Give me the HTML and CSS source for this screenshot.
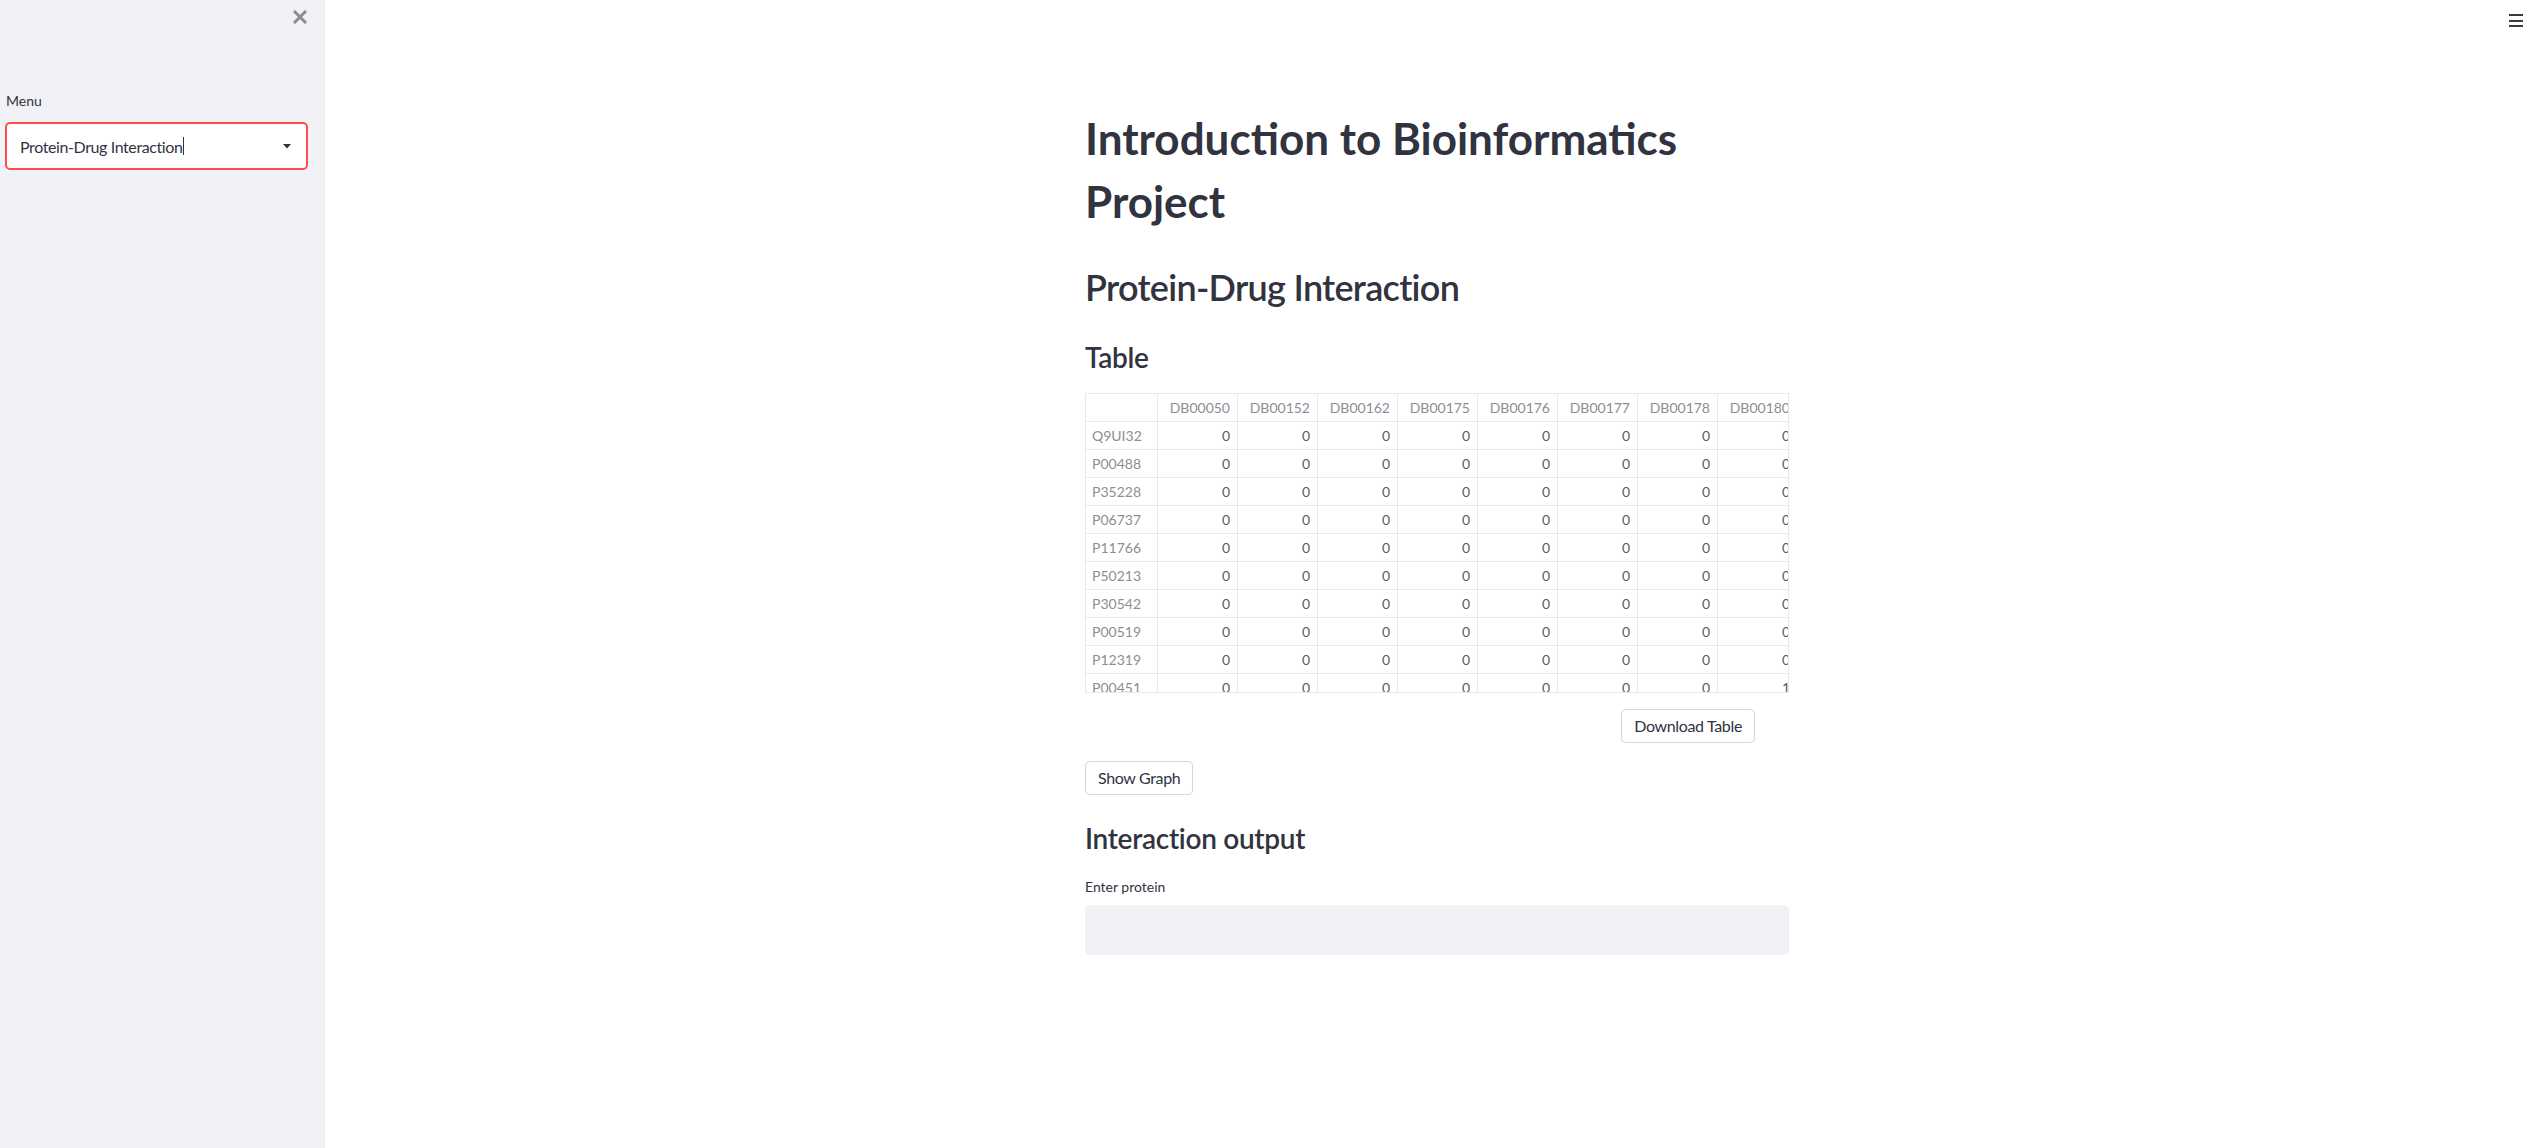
FILE: index.html
```html
<!DOCTYPE html>
<html lang="en">
<head>
<meta charset="utf-8">
<title>Introduction to Bioinformatics Project</title>
<link rel="stylesheet" href="styles.css">
</head>
<body>
<div class="app">
  <aside class="sidebar">
    <div class="sidebar-top">
      <button class="close-btn" aria-label="Close sidebar">
        <svg width="14" height="14" viewBox="0 0 14 14"><path d="M2 2 L12 12 M12 2 L2 12" stroke="#8b8c92" stroke-width="3" stroke-linecap="square" fill="none"/></svg>
      </button>
    </div>
    <div class="widget">
      <label class="widget-label">Menu</label>
      <div class="select">
        <span class="select-value">Protein-Drug Interaction</span><span class="text-caret"></span>
        <svg class="select-arrow" width="8" height="5" viewBox="0 0 8 5"><path d="M0 0 L8 0 L4 4.5 Z" fill="#31333f"/></svg>
      </div>
    </div>
  </aside>
  <main class="main">
    <header class="toolbar">
      <svg class="menu-icon" width="14" height="14" viewBox="0 0 14 14"><rect x="0" y="0" width="14" height="2" fill="#3a3b45"/><rect x="0" y="6" width="14" height="2" fill="#3a3b45"/><rect x="0" y="11" width="14" height="2" fill="#3a3b45"/></svg>
    </header>
    <div class="block">
      <h1 class="title">Introduction to Bioinformatics Project</h1>
      <h2 class="header">Protein-Drug Interaction</h2>
      <h3 class="subheader">Table</h3>
      <div class="table-wrap">
        <table class="df">
          <thead>
            <tr><th class="corner"></th><th>DB00050</th><th>DB00152</th><th>DB00162</th><th>DB00175</th><th>DB00176</th><th>DB00177</th><th>DB00178</th><th>DB00180</th><th>DB00181</th><th>DB00183</th></tr>
          </thead>
          <tbody>
            <tr><th class="idx">Q9UI32</th><td>0</td><td>0</td><td>0</td><td>0</td><td>0</td><td>0</td><td>0</td><td>0</td><td>0</td><td>0</td></tr>
            <tr><th class="idx">P00488</th><td>0</td><td>0</td><td>0</td><td>0</td><td>0</td><td>0</td><td>0</td><td>0</td><td>0</td><td>0</td></tr>
            <tr><th class="idx">P35228</th><td>0</td><td>0</td><td>0</td><td>0</td><td>0</td><td>0</td><td>0</td><td>0</td><td>0</td><td>0</td></tr>
            <tr><th class="idx">P06737</th><td>0</td><td>0</td><td>0</td><td>0</td><td>0</td><td>0</td><td>0</td><td>0</td><td>0</td><td>0</td></tr>
            <tr><th class="idx">P11766</th><td>0</td><td>0</td><td>0</td><td>0</td><td>0</td><td>0</td><td>0</td><td>0</td><td>0</td><td>0</td></tr>
            <tr><th class="idx">P50213</th><td>0</td><td>0</td><td>0</td><td>0</td><td>0</td><td>0</td><td>0</td><td>0</td><td>0</td><td>0</td></tr>
            <tr><th class="idx">P30542</th><td>0</td><td>0</td><td>0</td><td>0</td><td>0</td><td>0</td><td>0</td><td>0</td><td>0</td><td>0</td></tr>
            <tr><th class="idx">P00519</th><td>0</td><td>0</td><td>0</td><td>0</td><td>0</td><td>0</td><td>0</td><td>0</td><td>0</td><td>0</td></tr>
            <tr><th class="idx">P12319</th><td>0</td><td>0</td><td>0</td><td>0</td><td>0</td><td>0</td><td>0</td><td>0</td><td>0</td><td>0</td></tr>
            <tr><th class="idx">P00451</th><td>0</td><td>0</td><td>0</td><td>0</td><td>0</td><td>0</td><td>0</td><td>1</td><td>0</td><td>0</td></tr>
            <tr><th class="idx">P08172</th><td>0</td><td>0</td><td>0</td><td>0</td><td>0</td><td>0</td><td>0</td><td>0</td><td>0</td><td>0</td></tr>
          </tbody>
        </table>
      </div>
      <div class="download-row">
        <button class="btn">Download Table</button>
      </div>
      <div class="button-row">
        <button class="btn">Show Graph</button>
      </div>
      <h3 class="subheader output-head">Interaction output</h3>
      <label class="input-label">Enter protein</label>
      <div class="text-input"></div>
    </div>
  </main>
</div>
</body>
</html>
```

FILE: styles.css
```css
* { box-sizing: border-box; }

html, body {
  margin: 0;
  padding: 0;
  height: 100%;
  overflow: hidden;
  background: #ffffff;
  color: #31333f;
  font-family: "Source Sans Pro", Lato, "Noto Sans", sans-serif;
}

.app {
  display: flex;
  height: 100vh;
}

/* Sidebar */
.sidebar {
  width: 325px;
  flex: none;
  background: #f0f2f6;
  padding: 0 17px 0 5px;
  display: flex;
  flex-direction: column;
}

.sidebar-top {
  height: 90px;
  display: flex;
  justify-content: flex-end;
  align-items: flex-start;
}

.close-btn {
  margin-top: 10px;
  margin-right: 1px;
  width: 14px;
  height: 14px;
  padding: 0;
  border: none;
  background: none;
  display: flex;
}

.widget {
  display: flex;
  flex-direction: column;
}

.widget-label {
  font-size: 14px;
  line-height: 22px;
  color: #31333f;
  padding-left: 1px;
  margin-bottom: 10px;
}

.select {
  height: 48px;
  background: #ffffff;
  border: 2px solid #ff4b4b;
  border-radius: 5px;
  display: flex;
  align-items: center;
  padding: 0 15px 0 13px;
  font-size: 16px;
  letter-spacing: -0.4px;
  color: #31333f;
}

.select-value {
  white-space: nowrap;
}

.text-caret {
  width: 1px;
  height: 18px;
  background: #31333f;
  margin-left: 1px;
}

.select-arrow {
  margin-left: auto;
}

/* Main */
.main {
  flex: 1;
  display: flex;
  flex-direction: column;
  padding-left: 9px;
}

.toolbar {
  height: 42px;
  display: flex;
  justify-content: flex-end;
  align-items: flex-start;
  padding: 14px 17px 0 0;
  flex: none;
}

.block {
  width: 704px;
  margin: 0 auto;
  padding-top: 65px;
  display: flex;
  flex-direction: column;
}

.title {
  margin: 0;
  font-size: 44px;
  line-height: 63px;
  font-weight: 700;
  color: #31333f;
}

.header {
  margin: 33px 0 0;
  font-size: 36px;
  line-height: 43px;
  font-weight: 600;
  letter-spacing: -0.7px;
  color: #31333f;
}

.subheader {
  margin: 31px 0 0;
  font-size: 28px;
  line-height: 34px;
  font-weight: 600;
  letter-spacing: -0.3px;
  color: #31333f;
}

/* Dataframe */
.table-wrap {
  margin-top: 19px;
  width: 704px;
  height: 300px;
  border: 1px solid #e6e9ef;
  overflow: hidden;
}

.df {
  border-collapse: separate;
  border-spacing: 0;
  table-layout: fixed;
  width: 872px;
  font-size: 14px;
}

.df th,
.df td {
  width: 80px;
  height: 28px;
  padding: 0 7px;
  border-right: 1px solid #e6e9ef;
  border-bottom: 1px solid #e6e9ef;
  text-align: right;
  font-weight: 400;
  white-space: nowrap;
  overflow: hidden;
}

.df thead th {
  color: #8d8e95;
}

.df td {
  color: #595b64;
  font-weight: 400;
}

.df th.corner,
.df th.idx {
  width: 72px;
  text-align: left;
  padding-left: 6px;
  color: #8d8e95;
}

/* Buttons */
.download-row {
  display: flex;
  justify-content: flex-end;
  padding-right: 34px;
  margin-top: 16px;
}

.button-row {
  display: flex;
  margin-top: 18px;
}

.btn {
  height: 34px;
  padding: 0 12px;
  border: 1px solid rgba(49, 51, 63, 0.2);
  border-radius: 5px;
  background: #ffffff;
  color: #31333f;
  font-family: inherit;
  font-size: 16px;
  line-height: 24px;
  letter-spacing: -0.35px;
}

.output-head {
  margin-top: 26px;
}

.input-label {
  margin-top: 21px;
  font-size: 14px;
  line-height: 22px;
  color: #31333f;
}

.text-input {
  margin-top: 7px;
  height: 50px;
  background: #f0f2f6;
  border-radius: 5px;
}
```
